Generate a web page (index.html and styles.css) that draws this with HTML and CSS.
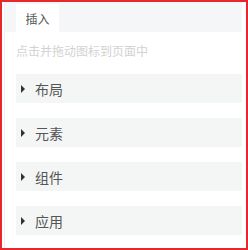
FILE: index.html
```html
<!DOCTYPE html>
<html>
<head>
<meta charset="utf-8">
<link rel="stylesheet" href="styles.css">
</head>
<body>
<div class="frame">
  <div class="panel">
    <div class="tabs">
      <div class="tab active">插入</div>
    </div>
    <div class="content">
      <div class="hint">点击并拖动图标到页面中</div>
      <div class="groups">
        <div class="group"><span class="arrow"></span><span class="title">布局</span></div>
        <div class="group"><span class="arrow"></span><span class="title">元素</span></div>
        <div class="group"><span class="arrow"></span><span class="title">组件</span></div>
        <div class="group"><span class="arrow"></span><span class="title">应用</span></div>
      </div>
    </div>
  </div>
</div>
</body>
</html>
```

FILE: styles.css
```css
html, body {
  margin: 0;
  padding: 0;
  background: #ffffff;
}
body {
  font-family: "Noto Sans CJK SC", "Noto Sans", sans-serif;
}
.frame {
  width: 248px;
  height: 250px;
  box-sizing: border-box;
  border: 2px solid #e8272c;
  padding: 0 4px 0 2px;
  background: #ffffff;
}
.panel {
  height: 100%;
  border-left: 1px solid #f0f0f0;
  display: flex;
  flex-direction: column;
}
.tabs {
  height: 30px;
  background: #f5f6f7;
  display: flex;
  align-items: flex-end;
  padding-left: 11px;
}
.tab {
  height: 28px;
  width: 43px;
  display: flex;
  align-items: center;
  justify-content: center;
  font-size: 12px;
  color: #555555;
}
.tab.active {
  background: #ffffff;
}
.content {
  padding: 0 0 0 11px;
}
.hint {
  margin-top: 10px;
  height: 18px;
  line-height: 18px;
  font-size: 12px;
  color: #d2d2d2;
}
.groups {
  margin-top: 14px;
  display: flex;
  flex-direction: column;
  gap: 15px;
}
.group {
  height: 29px;
  background: #f4f5f5;
  display: flex;
  align-items: center;
  padding-left: 5px;
}
.arrow {
  width: 0;
  height: 0;
  border-top: 4px solid transparent;
  border-bottom: 4px solid transparent;
  border-left: 4px solid #333333;
  margin-right: 10px;
}
.title {
  font-size: 14px;
  color: #555555;
}
```
